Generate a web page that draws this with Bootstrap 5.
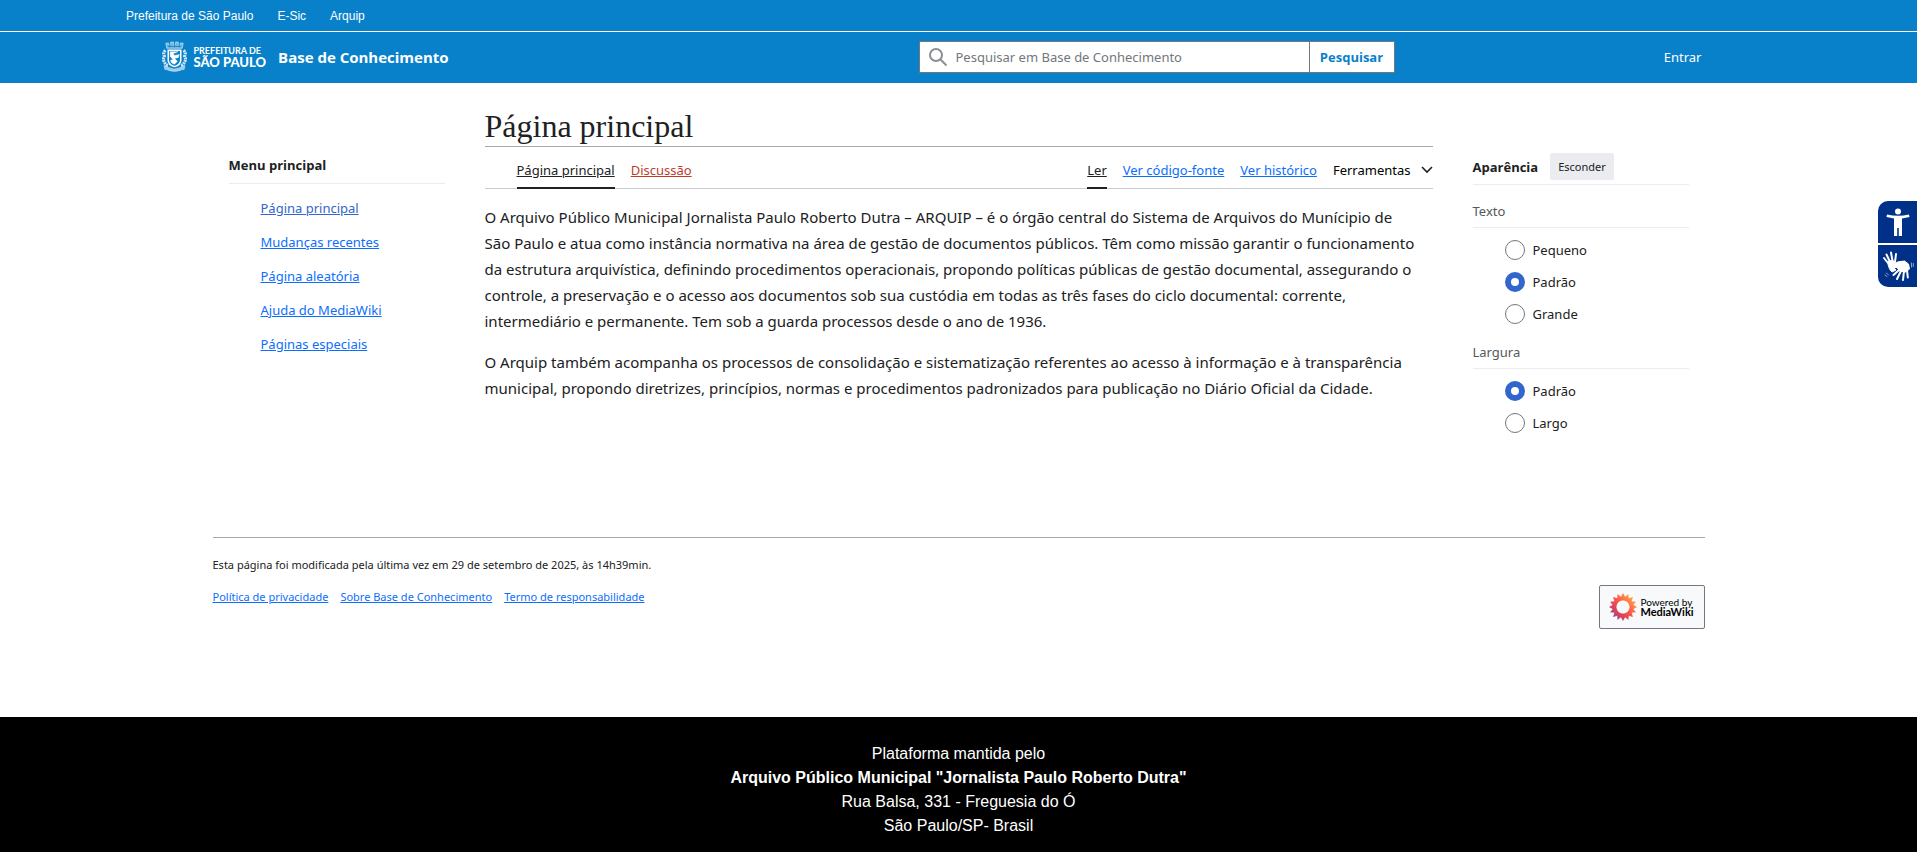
<!DOCTYPE html>
<html lang="pt-BR">
<head>
<meta charset="utf-8">
<meta name="viewport" content="width=device-width, initial-scale=1">
<title>Base de Conhecimento</title>
<link href="https://cdn.jsdelivr.net/npm/bootstrap@5.3.0/dist/css/bootstrap.min.css" rel="stylesheet">
<style>
  :root { --azul: #0981ca; --linha: #eaecf0; }
  body { font-family: "Noto Sans", "Open Sans", sans-serif; font-size: 13px; line-height: 20px; color: #202122; }
  .faixa { background: var(--azul); }
  .topo { max-width: 1665px; font: 12px/16px "Liberation Sans", Arial, sans-serif; padding: 8px 0 7px; }
  .cabecalho { border-top: 1px solid #fff; }
  .cab-grade { max-width: 1594px; min-height: 51px; display: grid; grid-template-columns: 757fr 476fr 361fr; align-items: center; padding-bottom: 1px; }
  .marca { font-family: "Open Sans", sans-serif; font-size: 15px; font-weight: 700; }
  .logo-texto { font-family: Lato, sans-serif; font-weight: 900; font-size: 13px; line-height: 13px; margin-left: 7px; }
  .logo-texto small { display: block; font-size: 9px; font-weight: 700; line-height: 10px; }
  .busca { border: 1px solid #72777d; height: 32px; }
  .busca input { font-size: 13px; color: #54595d; }
  .busca input::placeholder { color: #72777d; }
  .busca button { color: var(--azul); border: 0; border-left: 1px solid #72777d; font-family: "Open Sans", sans-serif; font-size: 13px; font-weight: 700; width: 85px; }
  .entrar { padding-right: 54px; }
  .pagina { max-width: 1492px; }
  .colunas { display: grid; grid-template-columns: 216px minmax(0, 1fr) 216px; column-gap: 40px; padding: 20px 16px 0; min-height: 454px; }
  .menu { padding-top: 52px; }
  .menu h2, .aparencia h2 { font-family: "Open Sans", sans-serif; font-size: 13px; line-height: 20px; font-weight: 700; margin: 0; }
  .menu h2 { padding-bottom: 8px; }
  .menu ul { padding: 7px 0 0 32px; line-height: 34px; }
  .risco { border-bottom: 1px solid var(--linha); }
  h1 { font: 32px/40px "Liberation Serif", Georgia, serif; border-bottom: 1px solid #a2a9b1; margin: 0; padding: 3px 0 0; }
  .abas { border-bottom: 1px solid #c8ccd1; padding-left: 32px; line-height: 20px; }
  .abas > div { gap: 16px; }
  .abas a { padding: 13px 0 7px; border-bottom: 2px solid transparent; margin-bottom: -1px; }
  .abas .ativa { color: #202122; border-color: #202122; }
  .abas button { color: #000; gap: 10px; padding-top: 5px; }
  .vermelho { color: #bf3c2c; }
  .texto { font-size: 15px; line-height: 26px; padding: 15px 12px 0 0; }
  .texto p { margin: 0 0 15px; }
  .aparencia { padding-top: 50px; }
  .esconder { background: #eaecf0; font-size: 11px; line-height: 27px; border-radius: 2px; padding: 0 8px; color: #202122; }
  .aparencia legend { font-size: 13px; line-height: 20px; color: #54595d; margin: 0; padding: 14px 0 6px; }
  .opcoes { padding: 12px 0 0 32px; display: grid; row-gap: 12px; }
  .opcoes .form-check-input { width: 20px; height: 20px; margin: 0; border: 1px solid #72777d; }
  .opcoes .form-check-input:checked { background: #fff; border: 6px solid #36c; }
  .rodape { border-top: 1px solid #a2a9b1; font-size: 11px; min-height: 180px; padding-top: 17px; }
  .rodape ul { gap: 12px; }
  .selo { width: 106px; height: 44px; border: 1px solid #72777d; border-radius: 2px; background: #f8f9fa; color: #000; font: 10px/10px Lato, sans-serif; gap: 3px; margin-top: 2px; }
  .selo strong { font-size: 11px; }
  .mantida { flex: 1 0 auto; background: #000; color: #fff; font: 16px/24px "Liberation Sans", Arial, sans-serif; padding: 25px 0 14px; }
  .acesso { position: fixed; right: 0; top: 201px; display: grid; gap: 2px; }
  .acesso button { width: 39px; height: 42px; background: #003087; }
  .acesso button:first-child { border-top-left-radius: 10px; }
  .acesso button:last-child { border-bottom-left-radius: 10px; }
</style>
</head>
<body class="d-flex flex-column min-vh-100">
<nav class="faixa" aria-label="Institucional">
  <div class="topo mx-auto d-flex gap-4">
    <a class="text-white text-decoration-none" href="#">Prefeitura de São Paulo</a>
    <a class="text-white text-decoration-none" href="#">E-Sic</a>
    <a class="text-white text-decoration-none" href="#">Arquip</a>
  </div>
</nav>
<header class="faixa cabecalho">
  <div class="cab-grade mx-auto">
    <a class="d-flex align-items-center text-white text-decoration-none" href="#">
      <svg width="25" height="34" viewBox="0 0 26 34" fill="none" stroke="#fff" aria-hidden="true">
        <path d="M5 8 4 2.500h3V4h2V1.500h3V4h2V1.500h3V4h2V2.500h3L21 8Z" fill="#fff" fill-opacity=".5" stroke-width=".6" opacity=".85"/>
        <path d="M6 6h14M8 3v4M13 2v5M18 3v4" stroke="#0981ca" stroke-width=".8"/>
        <path d="M6.500 10h13v10q0 5-6.500 7-6.500-2-6.500-7Z" stroke-width="1.600"/>
        <path d="M8.500 11.500h8l-5 2 1.500 2 5-1-1 3-4 1 3 3-3 3q-4-1-4-4l2.500-1-3-3Z" fill="#fff" stroke-width=".5"/>
        <path d="M3.500 10q-3 3-1 6-2 3 0 6 1 3 4 4M22.500 10q3 3 1 6 2 3 0 6-1 3-4 4" stroke-width="3.200" stroke-dasharray="2 .7" opacity=".8"/>
        <path d="M2 26q3 0 5 2 6 3 12 0 2-2 5-2l-1 4q-3 0-4 1-6 2-12 0-1-1-4-1Z" fill="#fff" fill-opacity=".7" stroke-width=".5" opacity=".85"/>
      </svg>
      <span class="logo-texto"><small>PREFEITURA DE</small>SÃO PAULO</span>
      <span class="marca ms-2 ps-1">Base de Conhecimento</span>
    </a>
    <form class="busca d-flex bg-white" role="search">
      <label class="d-flex align-items-center ps-2" for="q" aria-label="Pesquisar"><svg width="20" height="20" viewBox="0 0 20 20" fill="none" stroke="#8b8f93" stroke-width="2" aria-hidden="true"><circle cx="8" cy="8" r="6"/><path d="m12.500 12.500 6 6"/></svg></label>
      <input class="flex-grow-1 border-0 px-2 bg-transparent" id="q" type="search" placeholder="Pesquisar em Base de Conhecimento">
      <button class="bg-white p-0" type="submit">Pesquisar</button>
    </form>
    <div class="entrar text-end"><a class="text-white text-decoration-none" href="#">Entrar</a></div>
  </div>
</header>
<div class="pagina w-100 mx-auto">
  <div class="colunas">
    <nav class="menu" aria-label="Menu principal">
      <h2 class="risco">Menu principal</h2>
      <ul class="list-unstyled m-0">
        <li><a href="#" style="color:#36c">Página principal</a></li>
        <li><a href="#">Mudanças recentes</a></li>
        <li><a href="#">Página aleatória</a></li>
        <li><a href="#">Ajuda do MediaWiki</a></li>
        <li><a href="#">Páginas especiais</a></li>
      </ul>
    </nav>
    <main>
      <h1>Página principal</h1>
      <div class="abas d-flex justify-content-between">
        <div class="d-flex">
          <a class="ativa" href="#">Página principal</a>
          <a class="vermelho" href="#">Discussão</a>
        </div>
        <div class="d-flex">
          <a class="ativa" href="#">Ler</a>
          <a href="#">Ver código-fonte</a>
          <a href="#">Ver histórico</a>
          <button class="border-0 bg-transparent px-0 d-flex align-items-center" type="button">Ferramentas
            <svg width="12" height="8" viewBox="0 0 12 8" fill="none" stroke="#202122" stroke-width="1.600" aria-hidden="true"><path d="m1 1 5 5 5-5"/></svg>
          </button>
        </div>
      </div>
      <div class="texto">
        <p>O Arquivo Público Municipal Jornalista Paulo Roberto Dutra – ARQUIP – é o órgão central do Sistema de Arquivos do Munícipio de São Paulo e atua como instância normativa na área de gestão de documentos públicos. Têm como missão garantir o funcionamento da estrutura arquivística, definindo procedimentos operacionais, propondo políticas públicas de gestão documental, assegurando o controle, a preservação e o acesso aos documentos sob sua custódia em todas as três fases do ciclo documental: corrente, intermediário e permanente. Tem sob a guarda processos desde o ano de 1936.</p>
        <p>O Arquip também acompanha os processos de consolidação e sistematização referentes ao acesso à informação e à transparência municipal, propondo diretrizes, princípios, normas e procedimentos padronizados para publicação no Diário Oficial da Cidade.</p>
      </div>
    </main>
    <aside class="aparencia">
      <div class="risco d-flex align-items-center pb-1 gap-2">
        <h2>Aparência</h2>
        <button class="esconder border-0 ms-1" type="button">Esconder</button>
      </div>
      <fieldset class="pt-1">
        <legend class="risco pt-2 mt-1">Texto</legend>
        <div class="opcoes">
          <div class="d-flex gap-2"><input class="form-check-input" type="radio" name="texto" id="t1"><label for="t1">Pequeno</label></div>
          <div class="d-flex gap-2"><input class="form-check-input" type="radio" name="texto" id="t2" checked><label for="t2">Padrão</label></div>
          <div class="d-flex gap-2"><input class="form-check-input" type="radio" name="texto" id="t3"><label for="t3">Grande</label></div>
        </div>
      </fieldset>
      <fieldset class="pt-1">
        <legend class="risco">Largura</legend>
        <div class="opcoes">
          <div class="d-flex gap-2"><input class="form-check-input" type="radio" name="largura" id="l1" checked><label for="l1">Padrão</label></div>
          <div class="d-flex gap-2"><input class="form-check-input" type="radio" name="largura" id="l2"><label for="l2">Largo</label></div>
        </div>
      </fieldset>
    </aside>
  </div>
  <footer class="rodape">
    <div>Esta página foi modificada pela última vez em 29 de setembro de 2025, às 14h39min.</div>
    <div class="d-flex justify-content-between pt-2">
      <ul class="list-unstyled d-flex m-0 pt-1">
        <li><a href="#">Política de privacidade</a></li>
        <li><a href="#">Sobre Base de Conhecimento</a></li>
        <li><a href="#">Termo de responsabilidade</a></li>
      </ul>
      <a class="selo d-flex align-items-center justify-content-center text-decoration-none" href="#">
        <svg width="28" height="28" viewBox="-14 -14 28 28" aria-hidden="true">
          <defs>
            <linearGradient id="sol" x1="0" y1="1" x2="1" y2="0"><stop offset=".1" stop-color="#8a4a9e"/><stop offset=".3" stop-color="#d6405f"/><stop offset=".55" stop-color="#ff5a4a"/><stop offset=".9" stop-color="#ffb545"/></linearGradient>
            <path id="pet" d="M0-14 2.200-10 1.500-6.500h-3L-2.200-10Z"/>
            <mask id="flor" maskUnits="userSpaceOnUse" x="-14" y="-14" width="28" height="28">
              <g fill="#fff"><g id="q4"><use href="#pet"/><use href="#pet" transform="rotate(22.500)"/><use href="#pet" transform="rotate(45)"/><use href="#pet" transform="rotate(67.500)"/></g><use href="#q4" transform="rotate(90)"/><use href="#q4" transform="rotate(180)"/><use href="#q4" transform="rotate(270)"/></g>
              <circle r="8.800" fill="none" stroke="#fff" stroke-width="3"/>
            </mask>
          </defs>
          <rect x="-14" y="-14" width="28" height="28" fill="url(#sol)" mask="url(#flor)"/>
        </svg>
        <span>Powered by<br><strong>MediaWiki</strong></span>
      </a>
    </div>
  </footer>
</div>
<section class="mantida text-center">
  Plataforma mantida pelo<br>
  <strong>Arquivo Público Municipal "Jornalista Paulo Roberto Dutra"</strong><br>
  Rua Balsa, 331 - Freguesia do Ó<br>
  São Paulo/SP- Brasil
</section>
<div class="acesso">
  <button class="border-0 p-0" type="button" aria-label="Acessibilidade">
    <svg width="24" height="28" viewBox="0 0 24 28" fill="#fff" aria-hidden="true"><circle cx="12" cy="3.500" r="3"/><path d="M1 6.500q11 2.600 22 0l.5 2.500L16 10.500V28h-3.200v-8h-1.600v8H8V10.500L.5 9Z"/></svg>
  </button>
  <button class="border-0 p-0" type="button" aria-label="Libras">
    <svg width="32" height="32" viewBox="0 0 32 32" fill="none" stroke="#fff" stroke-linecap="round" aria-hidden="true">
      <path d="M6 13 2 8M8 12 4.500 4.500M10.500 11l-1.500-8.500M13 12l1-8" stroke-width="2"/>
      <path d="M5.500 12q4-3 8 0l-3.500 3.500 4 4.500-4 2q-3-2-4.500-10Z" fill="#fff" stroke-width="1"/>
      <path d="M9.500 15.500q6-5 13-4.500l4 3 1 5-4 3-6-1-2.500-3.500-5 0Z" fill="#fff" stroke-width="1"/>
      <path d="m17 20-5.500 5M19 21l-4 8M22 21l-1 9M25 20l.8 7.500" stroke-width="2"/>
      <path d="M29.500 13v4M31.300 13.500v3M4.500 23l2 2M3 25l2 1.500" stroke-width=".8" opacity=".7"/>
    </svg>
  </button>
</div>
<script src="https://cdn.jsdelivr.net/npm/bootstrap@5.3.0/dist/js/bootstrap.bundle.min.js"></script>
</body>
</html>
